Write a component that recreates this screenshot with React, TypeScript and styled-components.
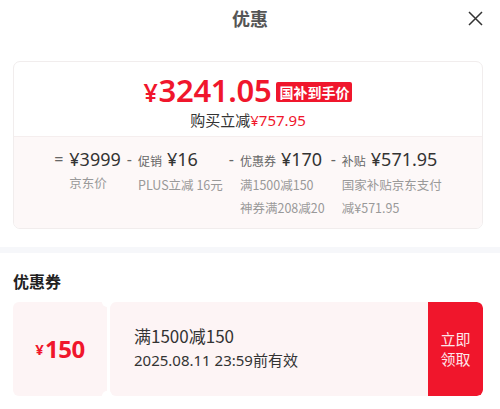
import React from "react";
import styled, { createGlobalStyle } from "styled-components";

const GlobalStyle = createGlobalStyle`
  *, *::before, *::after { box-sizing: border-box; }
  html, body { margin: 0; padding: 0; background: #fff; }
  body {
    font-family: "Noto Sans", "Noto Sans CJK SC", sans-serif;
    color: #333;
  }
`;

const RED = "#f0162c";

const Page = styled.div`
  width: 500px;
  height: 409px;
  overflow: hidden;
  background: #fff;
`;

const Header = styled.header`
  height: 36px;
  display: grid;
  grid-template-columns: 1fr auto 1fr;
  align-items: center;
`;

const Title = styled.h1`
  grid-column: 2;
  margin: 0;
  font-family: "Noto Sans CJK SC", sans-serif;
  font-size: 18px;
  font-weight: 700;
  color: #555;
  line-height: 24px;
`;

const Close = styled.button`
  grid-column: 3;
  justify-self: end;
  margin-right: 17px;
  width: 16px;
  height: 16px;
  padding: 0;
  border: 0;
  background: none;
  display: flex;
  align-items: center;
  justify-content: center;
`;

const PriceCard = styled.section`
  width: 470px;
  margin: 25px 0 0 13px;
  border: 1px solid #f1eded;
  border-radius: 7px;
  overflow: hidden;
`;

const PriceTop = styled.div`
  padding: 12px 0 6px;
  display: flex;
  flex-direction: column;
  align-items: center;
  gap: 2px;
  border-bottom: 1px solid #f5eeee;
`;

const PriceRow = styled.div`
  display: flex;
  align-items: center;
  gap: 5px;
  height: 34px;
`;

const BigPrice = styled.span`
  color: ${RED};
  font-weight: 600;
  font-size: 31px;
  line-height: 34px;
  letter-spacing: -0.3px;
`;

const Yen = styled.span<{ $size: number }>`
  font-size: ${(p) => p.$size}px;
  margin-right: 1px;
`;

const Badge = styled.span`
  background: ${RED};
  color: #fff;
  font-family: "Noto Sans CJK SC", sans-serif;
  font-weight: 700;
  font-size: 14px;
  line-height: 20px;
  padding: 0 3px;
  border-radius: 2px;
  margin-top: 2px;
`;

const SubTotal = styled.div`
  font-size: 15px;
  line-height: 20px;
  color: #333;
  font-family: "Noto Sans CJK SC", sans-serif;
`;

const RedText = styled.span`
  color: ${RED};
  font-family: "Noto Sans", "Noto Sans CJK SC", sans-serif;
`;

const Breakdown = styled.div`
  background: #fdf8f8;
  padding: 10px 0 9px;
  display: flex;
  justify-content: center;
  gap: 6px;
`;

const Column = styled.div`
  display: grid;
  grid-template-columns: auto auto;
  column-gap: 6px;
  align-content: start;
`;

const Sign = styled.span`
  font-size: 16px;
  color: #666;
  line-height: 24px;
`;

const AmountLine = styled.div`
  display: flex;
  align-items: baseline;
  gap: 5px;
  line-height: 24px;
`;

const AmountLabel = styled.span`
  font-family: "Noto Sans CJK SC", sans-serif;
  font-size: 12px;
  color: #666;
`;

const Amount = styled.span`
  font-size: 18px;
  color: #333;
`;

const SubNote = styled.div`
  grid-column: 2;
  font-family: "Noto Sans CJK SC", sans-serif;
  font-size: 12.5px;
  line-height: 23px;
  color: #999;
  white-space: nowrap;
`;

const Band = styled.div`
  height: 6px;
  background: #f6f7fa;
  margin-top: 18px;
`;

const SectionTitle = styled.h2`
  margin: 17px 0 0 13px;
  font-family: "Noto Sans CJK SC", sans-serif;
  font-size: 16px;
  font-weight: 700;
  line-height: 22px;
  color: #222;
`;

const Coupon = styled.div`
  position: relative;
  width: 470px;
  margin: 10px 0 0 13px;
  height: 94px;
  display: flex;
  gap: 3px;

  &::before,
  &::after {
    content: "";
    position: absolute;
    left: 89px;
    width: 10px;
    height: 10px;
    border-radius: 50%;
    background: #fff;
  }
  &::before { top: -5px; }
  &::after { bottom: -5px; }
`;

const CouponValue = styled.div`
  width: 94px;
  background: #fdf4f5;
  border-radius: 6px;
  display: flex;
  align-items: center;
  justify-content: center;
  color: ${RED};
  font-weight: 700;
`;

const ValueNum = styled.span`
  font-size: 24px;
  line-height: 30px;
  letter-spacing: -0.5px;
`;

const CouponBody = styled.div`
  flex: 1;
  display: flex;
  background: #fdf4f5;
  border-radius: 6px;
  overflow: hidden;
`;

const CouponInfo = styled.div`
  flex: 1;
  padding: 21px 0 0 24px;
  display: flex;
  flex-direction: column;
`;

const CouponName = styled.div`
  font-family: "Noto Sans CJK SC", sans-serif;
  font-size: 17px;
  line-height: 25px;
  color: #333;
`;

const CouponDate = styled.div`
  font-family: "Noto Sans", "Noto Sans CJK SC", sans-serif;
  font-size: 15px;
  line-height: 25px;
  color: #333;
`;

const ClaimButton = styled.button`
  width: 55px;
  border: 0;
  padding: 0;
  background: ${RED};
  color: #fde6ea;
  font-family: "Noto Sans CJK SC", sans-serif;
  font-size: 15px;
  line-height: 20px;
  border-radius: 0 6px 6px 0;
  display: flex;
  align-items: center;
  justify-content: center;
  text-align: center;
`;

type Item = {
  sign: string;
  label?: string;
  amount: string;
  notes: string[];
};

const items: Item[] = [
  { sign: "=", amount: "¥3999", notes: ["京东价"] },
  { sign: "-", label: "促销", amount: "¥16", notes: ["PLUS立减 16元"] },
  { sign: "-", label: "优惠券", amount: "¥170", notes: ["满1500减150", "神券满208减20"] },
  { sign: "-", label: "补贴", amount: "¥571.95", notes: ["国家补贴京东支付", "减¥571.95"] },
];

export default function App() {
  return (
    <Page>
      <GlobalStyle />
      <Header>
        <Title>优惠</Title>
        <Close aria-label="关闭">
          <svg width="15" height="15" viewBox="0 0 15 15">
            <path d="M1 1 L14 14 M14 1 L1 14" stroke="#333" strokeWidth="1.5" fill="none" />
          </svg>
        </Close>
      </Header>

      <PriceCard>
        <PriceTop>
          <PriceRow>
            <BigPrice>
              <Yen $size={25}>¥</Yen>3241.05
            </BigPrice>
            <Badge>国补到手价</Badge>
          </PriceRow>
          <SubTotal>
            购买立减<RedText>¥757.95</RedText>
          </SubTotal>
        </PriceTop>
        <Breakdown>
          {items.map((it) => (
            <Column key={it.amount}>
              <Sign>{it.sign}</Sign>
              <AmountLine>
                {it.label && <AmountLabel>{it.label}</AmountLabel>}
                <Amount>{it.amount}</Amount>
              </AmountLine>
              {it.notes.map((n) => (
                <SubNote key={n}>{n}</SubNote>
              ))}
            </Column>
          ))}
        </Breakdown>
      </PriceCard>

      <Band />
      <SectionTitle>优惠券</SectionTitle>
      <Coupon>
        <CouponValue>
          <Yen $size={15}>¥</Yen>
          <ValueNum>150</ValueNum>
        </CouponValue>
        <CouponBody>
          <CouponInfo>
            <CouponName>满1500减150</CouponName>
            <CouponDate>2025.08.11 23:59前有效</CouponDate>
          </CouponInfo>
          <ClaimButton>
            立即
            <br />
            领取
          </ClaimButton>
        </CouponBody>
      </Coupon>
    </Page>
  );
}
